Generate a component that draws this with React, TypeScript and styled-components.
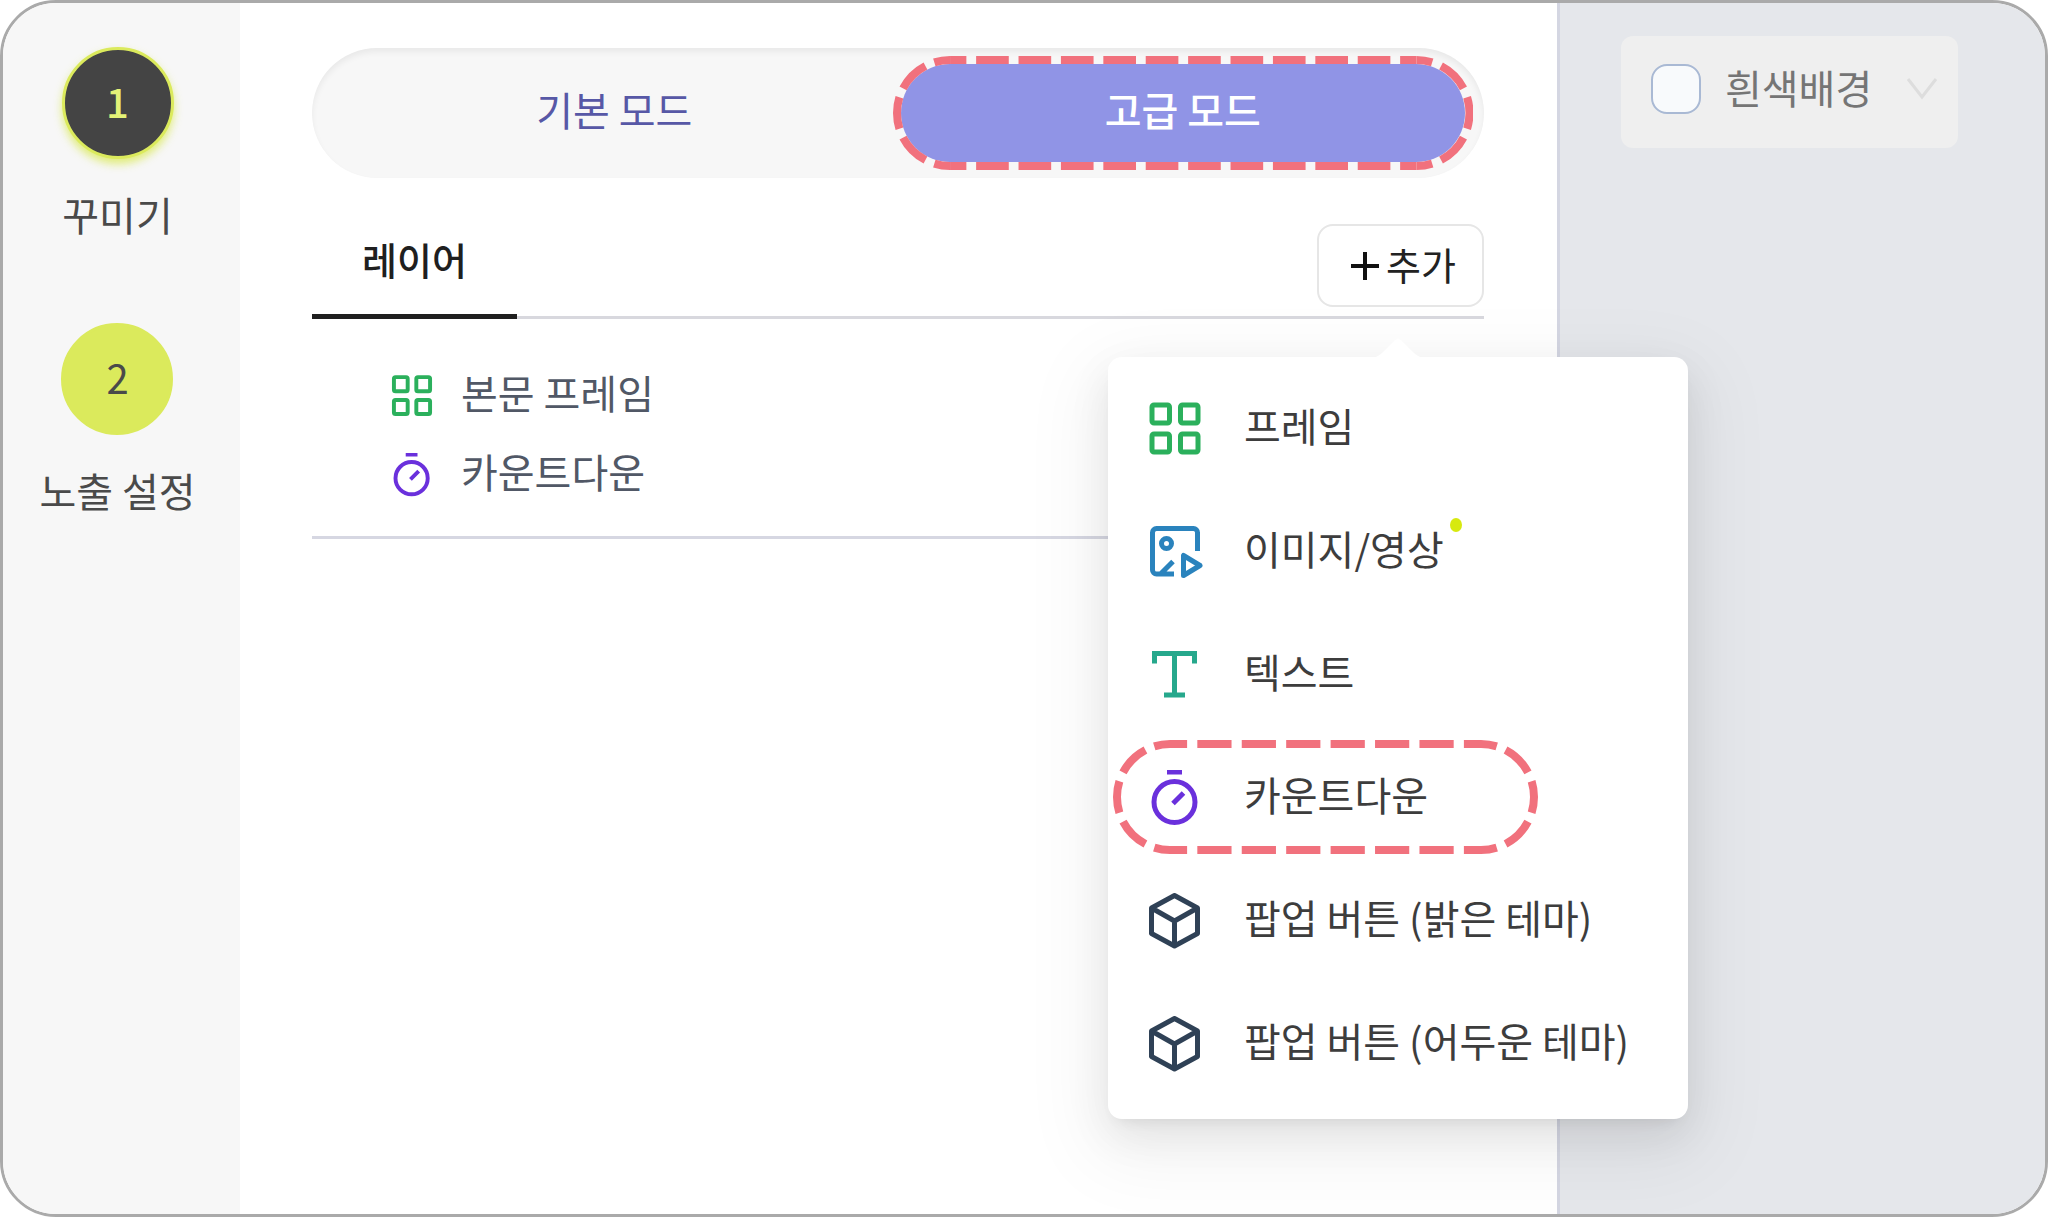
import React from "react";
import styled, { createGlobalStyle } from "styled-components";

const GlobalStyle = createGlobalStyle`
  * { box-sizing: border-box; }
  body {
    margin: 0;
    background: #ffffff;
    font-family: "Noto Sans CJK KR", "Noto Sans", sans-serif;
    font-size: 40px;
    line-height: 56px;
    color: #4a4a4a;
  }
  button, input { font: inherit; color: inherit; }
  button {
    border: 0;
    padding: 0;
    background: none;
    cursor: pointer;
  }
`;

const Frame = styled.div`
  display: grid;
  grid-template-columns: 237px minmax(0, 1fr) 488px;
  min-height: 100vh;
  border: 3px solid #aaaaaa;
  border-radius: 56px;
  overflow: hidden;
  background: #ffffff;
`;

/* ---------- step sidebar ---------- */

const Sidebar = styled.nav`
  display: flex;
  flex-direction: column;
  align-items: center;
  gap: 80px;
  padding-top: 44px;
  background: #f7f7f7;
`;

const Step = styled.button`
  display: flex;
  flex-direction: column;
  align-items: center;
  gap: 26px;
  padding-right: 8px;
`;

const StepNumber = styled.span<{ $active?: boolean }>`
  display: grid;
  place-items: center;
  width: 112px;
  height: 112px;
  padding-bottom: 4px;
  border-radius: 50%;
  border: 3px solid #dbea5c;
  background: ${(p) => (p.$active ? "#444444" : "#dbea5c")};
  color: ${(p) => (p.$active ? "#e4f277" : "#4a4a4a")};
  font-weight: ${(p) => (p.$active ? 500 : 400)};
  box-shadow: ${(p) => (p.$active ? "0 5px 8px rgba(219, 234, 92, 0.8)" : "none")};
`;

const StepLabel = styled.span`
  line-height: 58px;
`;

/* ---------- editor ---------- */

const Editor = styled.main`
  padding: 45px 73px 0 72px;
`;

const ModeSwitch = styled.div`
  display: grid;
  grid-template-columns: 1fr 1fr;
  height: 130px;
  padding: 8px 11px 8px 0;
  border-radius: 65px;
  background: #f7f7f7;
  box-shadow: inset 0 4px 6px rgba(0, 0, 0, 0.06);
`;

const ModeButton = styled.button<{ $active?: boolean }>`
  position: relative;
  padding: ${(p) => (p.$active ? "0 0 8px" : "0 0 8px 24px")};
  color: ${(p) => (p.$active ? "#ffffff" : "#5758a6")};
  font-weight: ${(p) => (p.$active ? 500 : 400)};

  &::before {
    content: "";
    position: absolute;
    inset: 8px;
    z-index: 0;
    border-radius: 49px;
    background: ${(p) => (p.$active ? "#9094e6" : "transparent")};
  }
`;

const ModeText = styled.span`
  position: relative;
`;

const Outline = styled.svg`
  position: absolute;
  inset: 0;
  width: 100%;
  height: 114px;
  fill: none;
  stroke: #f1717d;
  stroke-width: 8px;
`;

const TabBar = styled.div`
  display: flex;
  justify-content: space-between;
  align-items: flex-start;
  height: 95px;
  margin-top: 46px;
  border-bottom: 3px solid #d8d8de;
`;

const Tab = styled.button`
  height: 95px;
  padding: 0 50px 20px;
  border-bottom: 5px solid #1f1f1f;
  color: #1f1f1f;
  font-size: 38px;
  font-weight: 500;
`;

const AddButton = styled.button`
  display: flex;
  align-items: center;
  gap: 5px;
  height: 83px;
  padding: 0 26px 0 30px;
  border: 2px solid #e6e6e6;
  border-radius: 16px;
  background: #ffffff;
  color: #222222;
  font-size: 38px;
`;

const AddText = styled.span`
  padding-bottom: 4px;
`;

const LayerList = styled.ul`
  list-style: none;
  margin: 0;
  padding: 37px 0 22px 78px;
  border-bottom: 3px solid #d6d7e2;
`;

const Layer = styled.li`
  display: flex;
  align-items: center;
  gap: 27px;
  height: 79px;
  color: #515866;
`;

const LayerText = styled.span`
  padding-bottom: 8px;
`;

/* ---------- preview ---------- */

const Preview = styled.aside`
  padding: 33px 87px 0 61px;
  border-left: 3px solid #d4d6e2;
  background: #e5e7eb;
`;

const BackgroundPicker = styled.div`
  display: flex;
  align-items: center;
  justify-content: space-between;
  height: 112px;
  padding: 0 20px 6px 30px;
  border-radius: 12px;
  background: #efefef;
`;

const CheckLabel = styled.label`
  display: flex;
  align-items: center;
  gap: 24px;
  color: #757575;
`;

const CheckText = styled.span`
  padding-bottom: 4px;
`;

const CheckBox = styled.input`
  appearance: none;
  width: 50px;
  height: 50px;
  margin: 0;
  border: 2px solid #a9b9d4;
  border-radius: 16px;
  background: #f8fafc;
`;

const Chevron = styled.svg`
  display: block;
  fill: none;
  stroke: #dddddd;
  stroke-width: 3px;
`;

/* ---------- add menu ---------- */

const AddMenuAnchor = styled.div`
  position: relative;
`;

const AddMenu = styled.div`
  position: absolute;
  z-index: 2;
  top: 133px;
  right: -204px;
  width: 580px;
  padding: 10px 0 14px;
  border-radius: 14px;
  background: #ffffff;
  text-align: left;
  box-shadow:
    0 16px 42px rgba(0, 0, 0, 0.08),
    0 8px 16px -10px rgba(0, 0, 0, 0.12),
    0 24px 74px 20px rgba(0, 0, 0, 0.05);
`;

const MenuArrow = styled.svg`
  position: absolute;
  top: -19px;
  left: 265px;
  fill: #ffffff;
`;

const MenuItem = styled.button`
  position: relative;
  display: flex;
  align-items: center;
  gap: 41px;
  width: 100%;
  height: 123px;
  padding-left: 39px;
  color: #3d3d3d;
`;

const MenuText = styled.span`
  position: relative;
  padding-bottom: 8px;
`;

const NewDot = styled.i`
  position: absolute;
  top: -2px;
  right: -18px;
  width: 12px;
  height: 14px;
  border-radius: 50%;
  background: #d7e90f;
`;

const MenuOutline = styled(Outline)`
  inset: 4px auto auto 5px;
  width: 425px;
`;

/* ---------- drawings ---------- */

const Glyph = styled.svg`
  display: block;
  flex: none;
  fill: none;
  stroke-width: 5px;
`;

type IconName = "frame" | "media" | "text" | "timer" | "cube";

const ICONS: Record<IconName, { color: string; box: string; shape: React.ReactNode }> = {
  frame: {
    color: "#2bb05c",
    box: "7 7 56 56",
    shape: (
      <>
        <rect x="12" y="11" width="17.500" height="18" rx="2" />
        <rect x="40.500" y="11" width="17.500" height="18" rx="2" />
        <rect x="12" y="40" width="17.500" height="18" rx="2" />
        <rect x="40.500" y="40" width="17.500" height="18" rx="2" />
      </>
    ),
  },
  media: {
    color: "#2a83bd",
    box: "7 10 56 56",
    shape: (
      <>
        <path d="M57.500 37V18.500a4 4 0 0 0-4-4h-37a4 4 0 0 0-4 4V56a4 4 0 0 0 4 4H34M33 47.500 20.500 60" />
        <circle cx="26.500" cy="29.500" r="5" />
        <path d="M43.500 41.500v20L60 51.500z" strokeLinejoin="round" />
      </>
    ),
  },
  text: {
    color: "#26a88c",
    box: "7 8 56 56",
    shape: <path d="M14.500 24.500V14.500h40v10M34.500 14.500V56M24 56h21" />,
  },
  timer: {
    color: "#6a30dc",
    box: "7 11 56 56",
    shape: (
      <>
        <path d="M27 13h15M33 44.500 43.500 34" />
        <circle cx="34.500" cy="43" r="20.500" />
      </>
    ),
  },
  cube: {
    color: "#2f4156",
    box: "7 8 56 56",
    shape: (
      <path
        strokeLinejoin="round"
        d="M34.500 10.500 57.500 23v25.500L34.500 61 11.500 48.500V23zM11.500 23l23 13 23-13M34.500 36v25"
      />
    ),
  },
};

function Icon({ name, size }: { name: IconName; size: number }) {
  const { color, box, shape } = ICONS[name];
  return (
    <Glyph width={size} height={size} viewBox={box} stroke={color} aria-hidden="true">
      {shape}
    </Glyph>
  );
}

/* A dashed pill: every edge and arc carries a whole number of dashes. */
function dashedPill(width: number, dashes: number) {
  const right = width - 57;
  const edge = { strokeDasharray: "0.77 0.23", strokeDashoffset: 0.385 };
  return (
    <>
      <path d={`M57 4H${right}`} pathLength={dashes} {...edge} />
      <path d={`M${right} 4a53 53 0 0 1 0 106`} pathLength={4} {...edge} />
      <path d={`M${right} 110H57`} pathLength={dashes} {...edge} />
      <path d="M57 110a53 53 0 0 1 0-106" pathLength={4} {...edge} />
    </>
  );
}

const MENU: { icon: IconName; label: string; isNew?: boolean; marked?: boolean }[] = [
  { icon: "frame", label: "프레임" },
  { icon: "media", label: "이미지/영상", isNew: true },
  { icon: "text", label: "텍스트" },
  { icon: "timer", label: "카운트다운", marked: true },
  { icon: "cube", label: "팝업 버튼 (밝은 테마)" },
  { icon: "cube", label: "팝업 버튼 (어두운 테마)" },
];

const LAYERS: { icon: IconName; label: string }[] = [
  { icon: "frame", label: "본문 프레임" },
  { icon: "timer", label: "카운트다운" },
];

export default function App() {
  return (
    <>
      <GlobalStyle />
      <Frame>
        <Sidebar>
          <Step type="button">
            <StepNumber $active>1</StepNumber>
            <StepLabel>꾸미기</StepLabel>
          </Step>
          <Step type="button">
            <StepNumber>2</StepNumber>
            <StepLabel>노출 설정</StepLabel>
          </Step>
        </Sidebar>

        <Editor>
          <ModeSwitch>
            <ModeButton type="button">
              <ModeText>기본 모드</ModeText>
            </ModeButton>
            <ModeButton type="button" $active>
              <Outline viewBox="0 0 580 114" preserveAspectRatio="none" aria-hidden="true">
                {dashedPill(580, 11)}
              </Outline>
              <ModeText>고급 모드</ModeText>
            </ModeButton>
          </ModeSwitch>

          <TabBar>
            <Tab type="button">레이어</Tab>
            <AddMenuAnchor>
              <AddButton type="button">
                <Glyph width="32" height="32" viewBox="0 0 32 32" stroke="#111111" aria-hidden="true">
                  <path strokeWidth="4" d="M16 2v28M2 16h28" />
                </Glyph>
                <AddText>추가</AddText>
              </AddButton>
              <AddMenu>
                <MenuArrow width="50" height="20" viewBox="0 0 50 20" aria-hidden="true">
                  <path d="M0 20 C4 19 7 17 10 14 L22 2 Q25 -1 28 2 L40 14 C43 17 46 19 50 20z" />
                </MenuArrow>
                {MENU.map((item) => (
                  <MenuItem type="button" key={item.label}>
                    {item.marked && (
                      <MenuOutline viewBox="0 0 425 114" aria-hidden="true">
                        {dashedPill(425, 7)}
                      </MenuOutline>
                    )}
                    <Icon name={item.icon} size={56} />
                    <MenuText>
                      {item.label}
                      {item.isNew && <NewDot />}
                    </MenuText>
                  </MenuItem>
                ))}
              </AddMenu>
            </AddMenuAnchor>
          </TabBar>

          <LayerList>
            {LAYERS.map((layer) => (
              <Layer key={layer.label}>
                <Icon name={layer.icon} size={44} />
                <LayerText>{layer.label}</LayerText>
              </Layer>
            ))}
          </LayerList>
        </Editor>

        <Preview>
          <BackgroundPicker>
            <CheckLabel>
              <CheckBox type="checkbox" />
              <CheckText>흰색배경</CheckText>
            </CheckLabel>
            <button type="button" aria-label="배경 선택">
              <Chevron width="32" height="24" viewBox="0 0 32 24">
                <path d="M2 2l14 18L30 2" />
              </Chevron>
            </button>
          </BackgroundPicker>
        </Preview>
      </Frame>
    </>
  );
}
